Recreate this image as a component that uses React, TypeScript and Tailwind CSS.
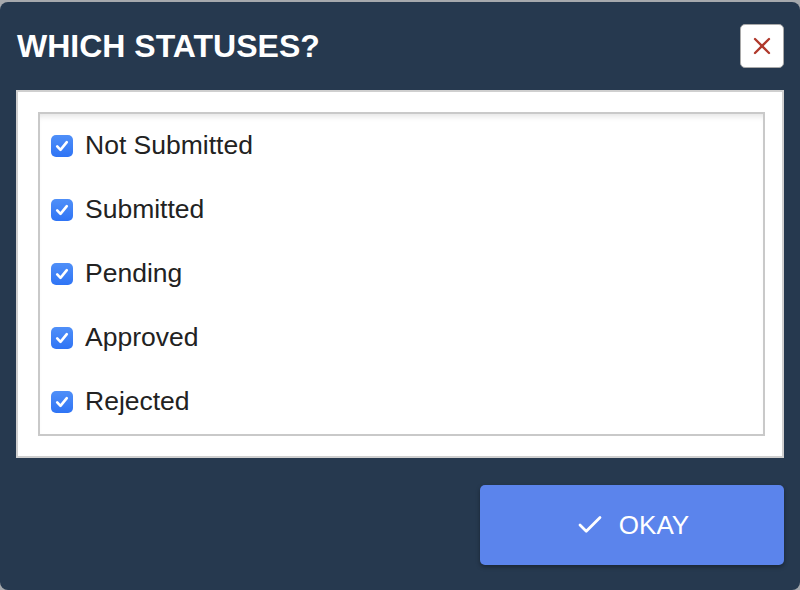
import { X, Check } from "lucide-react";

const statuses = ["Not Submitted", "Submitted", "Pending", "Approved", "Rejected"];

function CheckedBox() {
  return (
    <span className="flex h-[22px] w-[22px] shrink-0 items-center justify-center rounded-[5px] bg-gradient-to-b from-[#4f8ff8] to-[#2f74f5]">
      <svg width="16" height="16" viewBox="0 0 16 16" fill="none">
        <path d="M3.2 8.4 L6.5 11.8 L12.8 4.2" stroke="white" strokeWidth="2.6" strokeLinecap="round" strokeLinejoin="round" />
      </svg>
    </span>
  );
}

export default function App() {
  return (
    <div className="h-[590px] w-[800px] overflow-hidden bg-[#a6a9ad] pt-[2px]" style={{ fontFamily: '"Liberation Sans", Arial, sans-serif' }}>
      <div className="flex h-[588px] w-[800px] flex-col rounded-[8px] bg-[#26394f] pl-4 pr-4">
        {/* header */}
        <div className="flex h-[88px] items-start justify-between pt-[22px]">
          <h1 className="ml-px mt-[4px] text-[32px] font-bold leading-[36px] text-white">WHICH STATUSES?</h1>
          <button className="flex h-[44px] w-[44px] items-center justify-center rounded-[5px] border-[1.5px] border-[#a9a9a9] bg-white" aria-label="Close">
            <X size={28} strokeWidth={2} className="text-[#b0392c]" />
          </button>
        </div>

        {/* list panel */}
        <div className="border-2 border-[#cfcfcf] bg-white py-5 pl-5 pr-[17px]">
          <div className="border-2 border-[#c9c9c9] bg-white shadow-[inset_0_6px_6px_-4px_rgba(0,0,0,0.12)]">
            {statuses.map((s) => (
              <label key={s} className="flex h-16 items-center gap-3 pl-[11px] text-[26.5px] text-[#222]">
                <CheckedBox />
                <span>{s}</span>
              </label>
            ))}
          </div>
        </div>

        {/* footer */}
        <div className="flex justify-end pt-[27px]">
          <button className="flex h-[80px] w-[304px] items-center justify-center gap-[14px] rounded-[5px] bg-[#5b84ec] text-[26px] text-white shadow-[0_2px_4px_rgba(0,0,0,0.35)]">
            <Check size={30} strokeWidth={2.2} />
            <span>OKAY</span>
          </button>
        </div>
      </div>
    </div>
  );
}
